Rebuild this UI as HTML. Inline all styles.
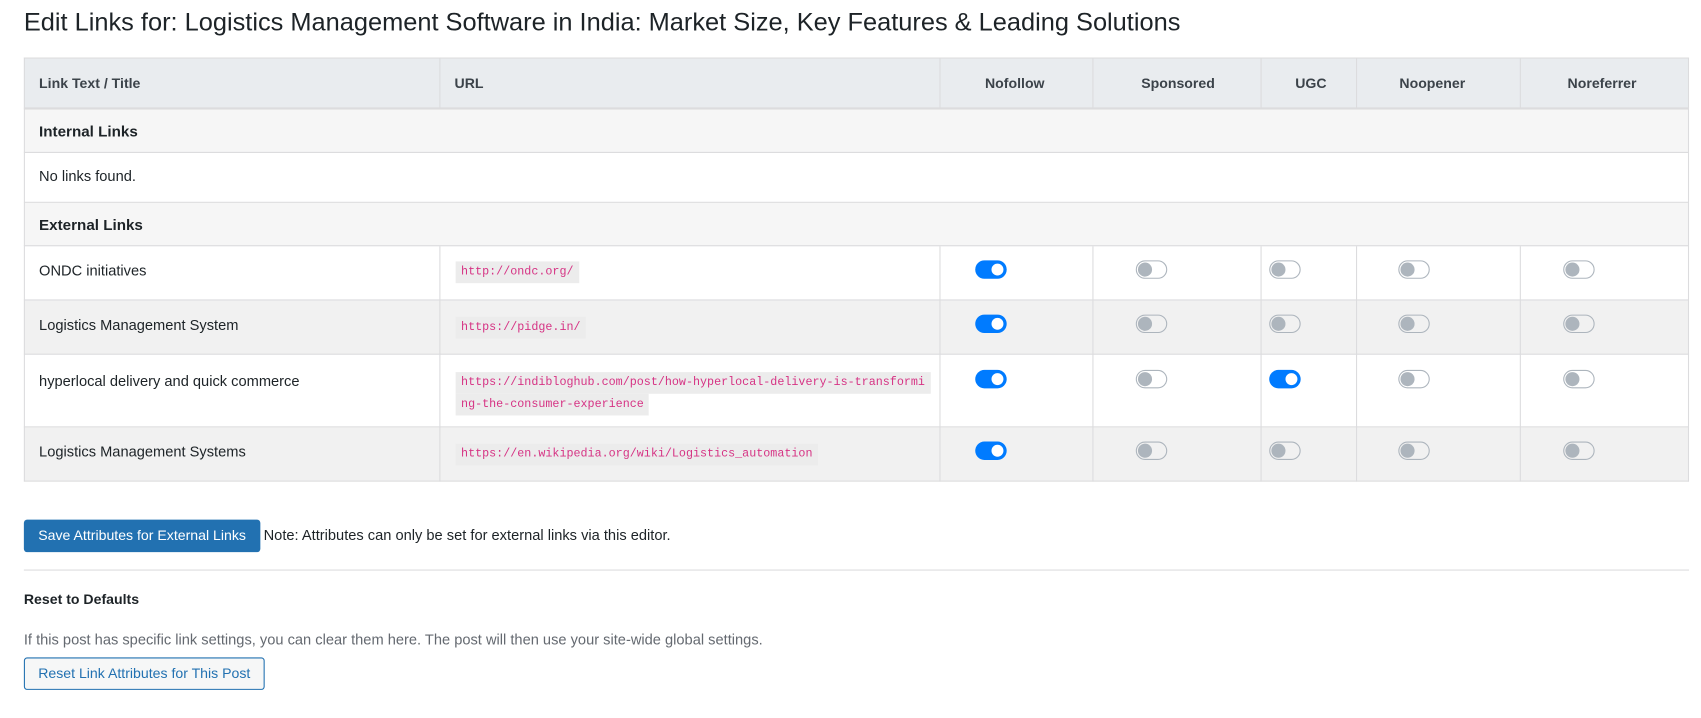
<!DOCTYPE html>
<html><head><meta charset="utf-8"><style>
*{margin:0;padding:0;box-sizing:border-box}
body{width:1701px;height:718px;background:#fff;overflow:hidden}
#f{position:absolute;left:0;top:0;width:1568px;height:662px;transform:scale(1.0848);transform-origin:0 0;font-family:"Liberation Sans",sans-serif;color:#1d2327;font-size:13.5px}
.a{position:absolute}
.t{white-space:nowrap}
.hl{position:absolute;background:#dcdcde;height:1px}
.vl{position:absolute;background:#dcdcde;width:1px}
code{position:absolute;font-family:"Liberation Mono",monospace;font-size:10.8px;color:#d63384;background:#ececec;padding:3px 5px;white-space:nowrap;line-height:14px}
.tg{position:absolute;width:29px;height:17px;border-radius:9px}
.on{background:#007bff}
.on::after{content:"";position:absolute;right:3px;top:3px;width:11px;height:11px;border-radius:50%;background:#fff}
.off{background:transparent;border:1px solid #adb5bd}
.off::after{content:"";position:absolute;left:1px;top:1px;width:13px;height:13px;border-radius:50%;background:#adb5bd}
.th{font-weight:bold;color:#3c434a;font-size:13px}
</style></head><body><div id="f">
<div class="a t" style="left:22px;top:7px;font-size:23.4px;color:#1d2327">Edit Links for: Logistics Management Software in India: Market Size, Key Features &amp; Leading Solutions</div>

<div class="a" style="left:22px;top:53px;width:1535px;height:47px;background:#e9ecef"></div>
<div class="a" style="left:22px;top:100px;width:1535px;height:41px;background:#f6f6f6"></div>
<div class="a" style="left:22px;top:187px;width:1535px;height:40px;background:#f6f6f6"></div>
<div class="a" style="left:22px;top:277px;width:1535px;height:50px;background:#f1f1f1"></div>
<div class="a" style="left:22px;top:394px;width:1535px;height:50px;background:#f1f1f1"></div>

<div class="hl" style="left:22px;top:53px;width:1535px"></div>
<div class="hl" style="left:22px;top:99px;width:1535px;height:2px"></div>
<div class="hl" style="left:22px;top:140px;width:1535px"></div>
<div class="hl" style="left:22px;top:186px;width:1535px"></div>
<div class="hl" style="left:22px;top:226px;width:1535px"></div>
<div class="hl" style="left:22px;top:276px;width:1535px"></div>
<div class="hl" style="left:22px;top:326px;width:1535px"></div>
<div class="hl" style="left:22px;top:393px;width:1535px"></div>
<div class="hl" style="left:22px;top:443px;width:1535px"></div>
<div class="vl" style="left:22px;top:53px;height:391px"></div>
<div class="vl" style="left:1556px;top:53px;height:391px"></div>
<div class="vl" style="left:405px;top:53px;height:47px"></div>
<div class="vl" style="left:866px;top:53px;height:47px"></div>
<div class="vl" style="left:1007px;top:53px;height:47px"></div>
<div class="vl" style="left:1162px;top:53px;height:47px"></div>
<div class="vl" style="left:1250px;top:53px;height:47px"></div>
<div class="vl" style="left:1401px;top:53px;height:47px"></div>
<div class="vl" style="left:405px;top:227px;height:217px"></div>
<div class="vl" style="left:866px;top:227px;height:217px"></div>
<div class="vl" style="left:1007px;top:227px;height:217px"></div>
<div class="vl" style="left:1162px;top:227px;height:217px"></div>
<div class="vl" style="left:1250px;top:227px;height:217px"></div>
<div class="vl" style="left:1401px;top:227px;height:217px"></div>

<div class="a t th" style="left:36px;top:69px">Link Text / Title</div>
<div class="a t th" style="left:419px;top:69px">URL</div>
<div class="a t th" style="left:908px;top:69px">Nofollow</div>
<div class="a t th" style="left:1052px;top:69px">Sponsored</div>
<div class="a t th" style="left:1194px;top:69px">UGC</div>
<div class="a t th" style="left:1290px;top:69px">Noopener</div>
<div class="a t th" style="left:1445px;top:69px">Noreferrer</div>

<div class="a t" style="left:36px;top:113px;font-weight:bold;font-size:14px">Internal Links</div>
<div class="a t" style="left:36px;top:155px">No links found.</div>
<div class="a t" style="left:36px;top:199px;font-weight:bold;font-size:14px">External Links</div>

<div class="a t" style="left:36px;top:242px">ONDC initiatives</div>
<div class="a t" style="left:36px;top:292px">Logistics Management System</div>
<div class="a t" style="left:36px;top:344px">hyperlocal delivery and quick commerce</div>
<div class="a t" style="left:36px;top:409px">Logistics Management Systems</div>

<code style="left:420px;top:241px">http://ondc.org/</code>
<code style="left:420px;top:292px">https://pidge.in/</code>
<code style="left:420px;top:343px">https://indibloghub.com/post/how-hyperlocal-delivery-is-transformi</code>
<code style="left:420px;top:363px">ng-the-consumer-experience</code>
<code style="left:420px;top:409px">https://en.wikipedia.org/wiki/Logistics_automation</code>

<div class="tg on" style="left:899px;top:240px"></div><div class="tg off" style="left:1047px;top:240px"></div><div class="tg off" style="left:1170px;top:240px"></div><div class="tg off" style="left:1289px;top:240px"></div><div class="tg off" style="left:1441px;top:240px"></div>
<div class="tg on" style="left:899px;top:290px"></div><div class="tg off" style="left:1047px;top:290px"></div><div class="tg off" style="left:1170px;top:290px"></div><div class="tg off" style="left:1289px;top:290px"></div><div class="tg off" style="left:1441px;top:290px"></div>
<div class="tg on" style="left:899px;top:341px"></div><div class="tg off" style="left:1047px;top:341px"></div><div class="tg on" style="left:1170px;top:341px"></div><div class="tg off" style="left:1289px;top:341px"></div><div class="tg off" style="left:1441px;top:341px"></div>
<div class="tg on" style="left:899px;top:407px"></div><div class="tg off" style="left:1047px;top:407px"></div><div class="tg off" style="left:1170px;top:407px"></div><div class="tg off" style="left:1289px;top:407px"></div><div class="tg off" style="left:1441px;top:407px"></div>

<div class="a t" style="left:22px;top:479px;width:218px;height:30px;background:#2271b1;border-radius:3px;color:#fff;line-height:30px;text-align:center;font-size:13px">Save Attributes for External Links</div>
<div class="a t" style="left:243px;top:486px">Note: Attributes can only be set for external links via this editor.</div>
<div class="hl" style="left:22px;top:525px;width:1535px"></div>
<div class="a t" style="left:22px;top:545px;font-weight:bold;font-size:13px">Reset to Defaults</div>
<div class="a t" style="left:22px;top:582px;color:#646970">If this post has specific link settings, you can clear them here. The post will then use your site-wide global settings.</div>
<div class="a t" style="left:22px;top:606px;width:222px;height:30px;border:1px solid #2271b1;border-radius:3px;color:#2271b1;line-height:28px;text-align:center;background:#f6f7f7;font-size:13px">Reset Link Attributes for This Post</div>
</div></body></html>
